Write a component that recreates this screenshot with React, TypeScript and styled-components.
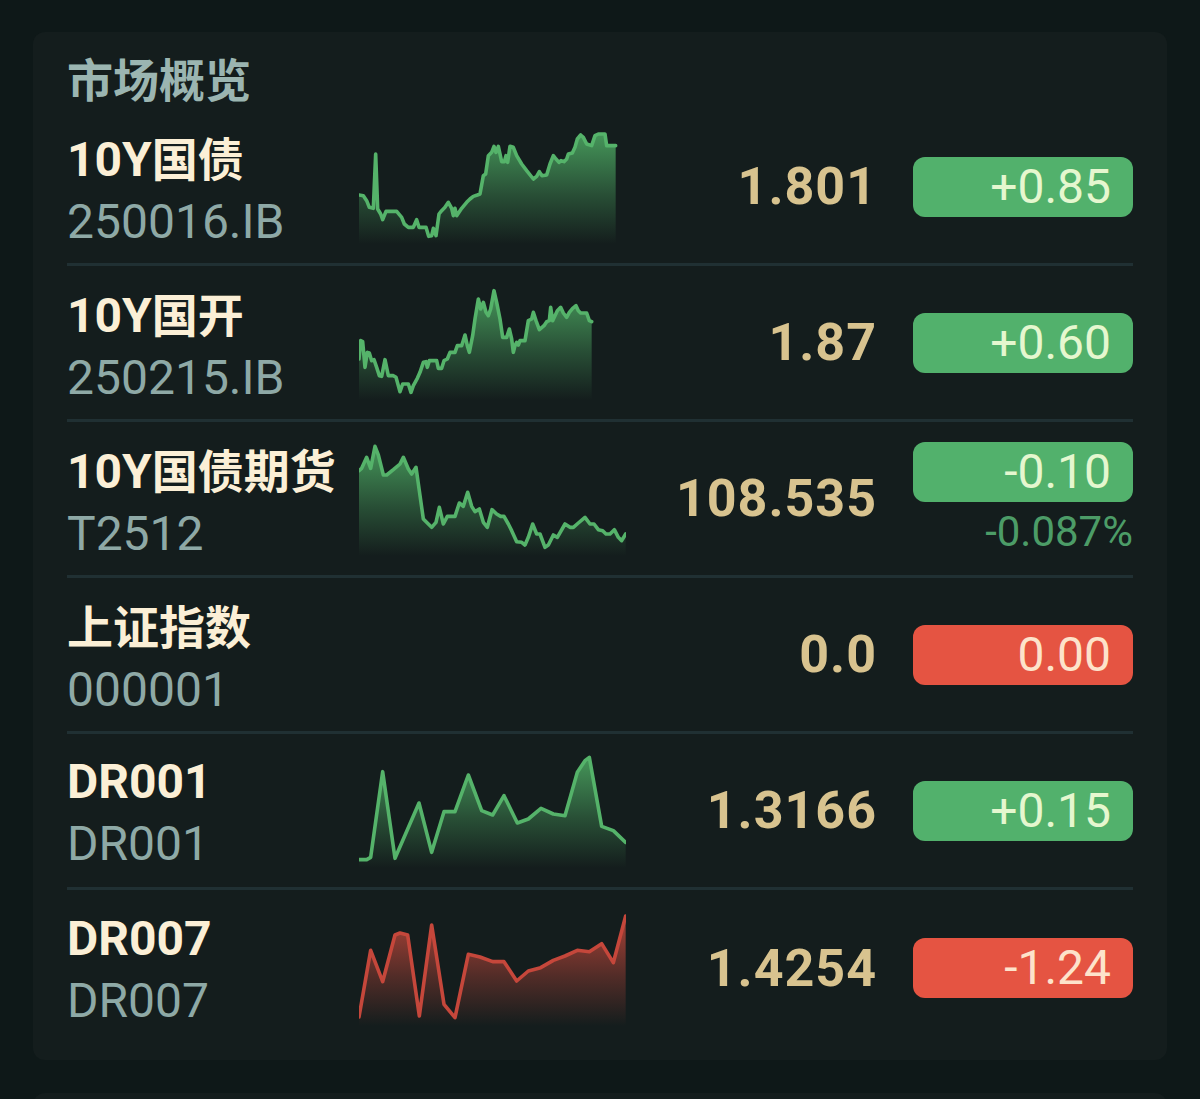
import React from 'react'
import styled, { createGlobalStyle } from 'styled-components'

const GlobalStyle = createGlobalStyle`
  html, body {
    margin: 0;
    padding: 0;
    background: #0e1818;
    overflow: hidden;
  }
  body {
    font-family: Roboto, 'Noto Sans CJK SC', sans-serif;
  }
`

const Page = styled.div`
  display: flex;
  flex-direction: column;
  gap: 33px;
  padding: 32px 33px;
`

const Card = styled.section`
  background: #141d1d;
  border-radius: 12px;
  padding: 16px 34px 14px;
`

const Placeholder = styled.div`
  background: #141d1d;
  border-radius: 12px;
  height: 200px;
`

const Title = styled.h2`
  margin: 0;
  height: 62px;
  font-size: 46px;
  line-height: 58px;
  font-weight: 700;
  color: #9bb5b1;
  font-family: 'Noto Sans CJK SC', Roboto, sans-serif;
`

const Row = styled.div<{ $last?: boolean }>`
  display: grid;
  grid-template-columns: 292px 267px 1fr 220px;
  align-items: center;
  height: 156px;
  box-sizing: border-box;
  border-bottom: ${(p) => (p.$last ? 'none' : '3px solid #203033')};
`

const NameCell = styled.div`
  display: flex;
  flex-direction: column;
  padding-top: 4px;
  white-space: nowrap;
`

const Name = styled.div`
  font-size: 48px;
  line-height: 62px;
  font-weight: 700;
  color: #fbefd6;
`

// 汉字在参考图里比西文略小一号
const Han = styled.span`
  font-size: 46px;
  font-family: 'Noto Sans CJK SC', sans-serif;
`

const Code = styled.div`
  font-size: 48px;
  line-height: 62px;
  font-weight: 400;
  color: #8ea9a6;
`

const ChartBox = styled.div`
  height: 115px;
  display: flex;
`

const Price = styled.div`
  text-align: right;
  padding-right: 36px;
  font-size: 52px;
  font-weight: 700;
  letter-spacing: 1px;
  color: #d8c38f;
`

const ChangeCell = styled.div`
  display: flex;
  flex-direction: column;
  align-items: stretch;
`

const Badge = styled.div<{ $up: boolean }>`
  height: 60px;
  border-radius: 12px;
  padding-right: 22px;
  text-align: right;
  font-size: 48px;
  line-height: 60px;
  background: ${(p) => (p.$up ? '#52b16c' : '#e55442')};
  color: ${(p) => (p.$up ? '#e5f7cf' : '#fde3cb')};
`

const SubChange = styled.div`
  margin-top: 7px;
  text-align: right;
  font-size: 42px;
  line-height: 46px;
  color: #4c9c67;
`

type Pt = [number, number]

interface SparkProps {
  id: string
  pts: Pt[]
  vbY: number
  up: boolean
}

// 坐标沿用截图放大 3 倍后的单位，viewBox 负责换算
function Spark({ id, pts, vbY, up }: SparkProps) {
  const bottom = vbY + 345
  const line = pts.map(([x, y], i) => `${i ? 'L' : 'M'}${x},${y}`).join(' ')
  const last = pts[pts.length - 1]
  const area = `${line} L${last[0]},${bottom} L${pts[0][0]},${bottom} Z`
  const stroke = up ? '#55b36a' : '#c5473b'
  const fill = up ? '#4eac64' : '#c4483b'
  return (
    <svg width="267" height="115" viewBox={`57 ${vbY} 801 345`} preserveAspectRatio="none">
      <defs>
        <linearGradient id={id} x1="0" y1="0" x2="0" y2="1">
          <stop offset="0%" stopColor={fill} stopOpacity={0.85} />
          <stop offset="55%" stopColor={fill} stopOpacity={0.35} />
          <stop offset="100%" stopColor={fill} stopOpacity={0} />
        </linearGradient>
      </defs>
      <path d={area} fill={`url(#${id})`} />
      <path
        d={line}
        fill="none"
        stroke={stroke}
        strokeWidth={3.6}
        strokeLinejoin="round"
        strokeLinecap="round"
        vectorEffect="non-scaling-stroke"
      />
    </svg>
  )
}

function renderName(name: string) {
  return name.split(/([\u4e00-\u9fff]+)/).map((part, i) =>
    /[\u4e00-\u9fff]/.test(part) ? <Han key={i}>{part}</Han> : part,
  )
}

const gz: Pt[] = [
  [57, 228], [70, 230], [80, 245], [88, 265], [100, 268], [107, 105], [113, 270], [122, 285], [128, 302],
  [138, 277], [170, 277], [185, 295], [193, 315], [205, 325], [220, 325], [230, 302], [237, 325], [258, 325],
  [266, 352], [275, 350], [280, 328], [288, 350], [297, 285], [305, 275], [315, 265], [325, 250], [335, 268],
  [340, 290], [345, 268], [350, 290], [365, 268], [380, 250], [390, 240], [400, 232], [412, 228], [420, 225],
  [430, 170], [437, 165], [445, 110], [455, 100], [462, 82], [468, 100], [475, 82], [485, 128], [493, 128],
  [498, 110], [503, 130], [510, 82], [520, 85], [530, 110], [545, 135], [560, 155], [580, 180], [590, 172],
  [598, 158], [606, 170], [620, 168], [630, 135], [640, 110], [648, 120], [657, 130], [663, 125], [672, 128],
  [680, 120], [685, 105], [697, 102], [705, 85], [712, 60], [722, 48], [730, 55], [740, 75], [755, 80],
  [765, 50], [775, 45], [795, 45], [800, 80], [827, 80],
]

const gk: Pt[] = [
  [57, 720], [62, 665], [68, 668], [75, 745], [82, 700], [88, 702], [95, 725], [102, 722], [110, 745],
  [118, 770], [125, 772], [135, 722], [145, 770], [160, 770], [168, 775], [180, 818], [188, 795], [205, 795],
  [213, 820], [220, 800], [232, 778], [240, 760], [250, 730], [258, 728], [262, 745], [268, 725], [290, 725],
  [295, 748], [305, 748], [312, 725], [322, 720], [330, 700], [345, 700], [352, 680], [365, 680], [375, 648],
  [382, 680], [388, 700], [398, 650], [405, 600], [415, 540], [422, 570], [430, 550], [438, 580], [445, 590],
  [452, 570], [462, 515], [470, 550], [480, 600], [488, 655], [500, 655], [508, 630], [515, 660], [520, 700],
  [525, 680], [530, 670], [535, 678], [540, 665], [555, 665], [560, 635], [565, 605], [575, 600], [580, 580],
  [588, 605], [598, 632], [612, 620], [620, 608], [628, 605], [632, 565], [638, 605], [645, 590], [652, 575],
  [662, 565], [670, 582], [680, 595], [688, 580], [698, 568], [708, 560], [715, 575], [722, 582], [740, 582],
  [748, 605], [755, 608],
]

const fut: Pt[] = [
  [57, 125], [65, 118], [80, 85], [92, 118], [105, 52], [115, 78], [130, 138], [140, 138], [160, 122],
  [180, 105], [190, 85], [205, 120], [215, 135], [228, 115], [250, 270], [265, 285], [275, 295], [288, 280],
  [298, 235], [310, 285], [322, 262], [345, 262], [358, 222], [370, 232], [383, 190], [395, 232], [405, 248],
  [418, 240], [430, 280], [442, 295], [456, 242], [470, 255], [482, 262], [492, 262], [505, 285], [515, 305],
  [530, 338], [545, 340], [555, 348], [565, 325], [578, 285], [590, 315], [600, 315], [615, 355], [625, 348],
  [640, 318], [652, 325], [675, 285], [690, 295], [700, 295], [715, 282], [735, 265], [750, 285], [762, 285],
  [775, 302], [788, 305], [798, 315], [810, 315], [823, 302], [835, 325], [845, 335], [857, 315],
]

const dr1: Pt[] = [
  [57, 362], [80, 362], [92, 355], [128, 98], [165, 358], [237, 192], [275, 340], [312, 218], [345, 218],
  [385, 108], [425, 215], [458, 228], [492, 170], [532, 252], [565, 240], [603, 208], [640, 225], [675, 230],
  [712, 100], [735, 65], [748, 55], [785, 262], [820, 275], [857, 310],
]

const dr7: Pt[] = [
  [57, 828], [92, 628], [128, 722], [165, 582], [180, 576], [203, 582], [238, 825], [275, 552], [312, 790],
  [345, 830], [385, 640], [420, 648], [458, 662], [492, 662], [530, 720], [565, 690], [602, 680], [640, 658],
  [675, 645], [712, 628], [748, 632], [785, 608], [820, 665], [857, 525],
]

interface Item {
  name: string
  code: string
  price: string
  change: string
  up: boolean
  pct?: string
  spark?: { pts: Pt[]; vbY: number; up: boolean }
}

const items: Item[] = [
  { name: '10Y国债', code: '250016.IB', price: '1.801', change: '+0.85', up: true, spark: { pts: gz, vbY: 30, up: true } },
  { name: '10Y国开', code: '250215.IB', price: '1.87', change: '+0.60', up: true, spark: { pts: gk, vbY: 498, up: true } },
  {
    name: '10Y国债期货',
    code: 'T2512',
    price: '108.535',
    change: '-0.10',
    up: true,
    pct: '-0.087%',
    spark: { pts: fut, vbY: 36, up: true },
  },
  { name: '上证指数', code: '000001', price: '0.0', change: '0.00', up: false },
  { name: 'DR001', code: 'DR001', price: '1.3166', change: '+0.15', up: true, spark: { pts: dr1, vbY: 42, up: true } },
  { name: 'DR007', code: 'DR007', price: '1.4254', change: '-1.24', up: false, spark: { pts: dr7, vbY: 510, up: false } },
]

export default function App() {
  return (
    <>
      <GlobalStyle />
      <Page>
        <Card>
          <Title>市场概览</Title>
          {items.map((it, i) => (
            <Row key={it.code} $last={i === items.length - 1}>
              <NameCell>
                <Name>{renderName(it.name)}</Name>
                <Code>{it.code}</Code>
              </NameCell>
              <ChartBox>
                {it.spark && <Spark id={`spark-${i}`} pts={it.spark.pts} vbY={it.spark.vbY} up={it.spark.up} />}
              </ChartBox>
              <Price>{it.price}</Price>
              <ChangeCell>
                <Badge $up={it.up}>{it.change}</Badge>
                {it.pct && <SubChange>{it.pct}</SubChange>}
              </ChangeCell>
            </Row>
          ))}
        </Card>
        <Placeholder />
      </Page>
    </>
  )
}
